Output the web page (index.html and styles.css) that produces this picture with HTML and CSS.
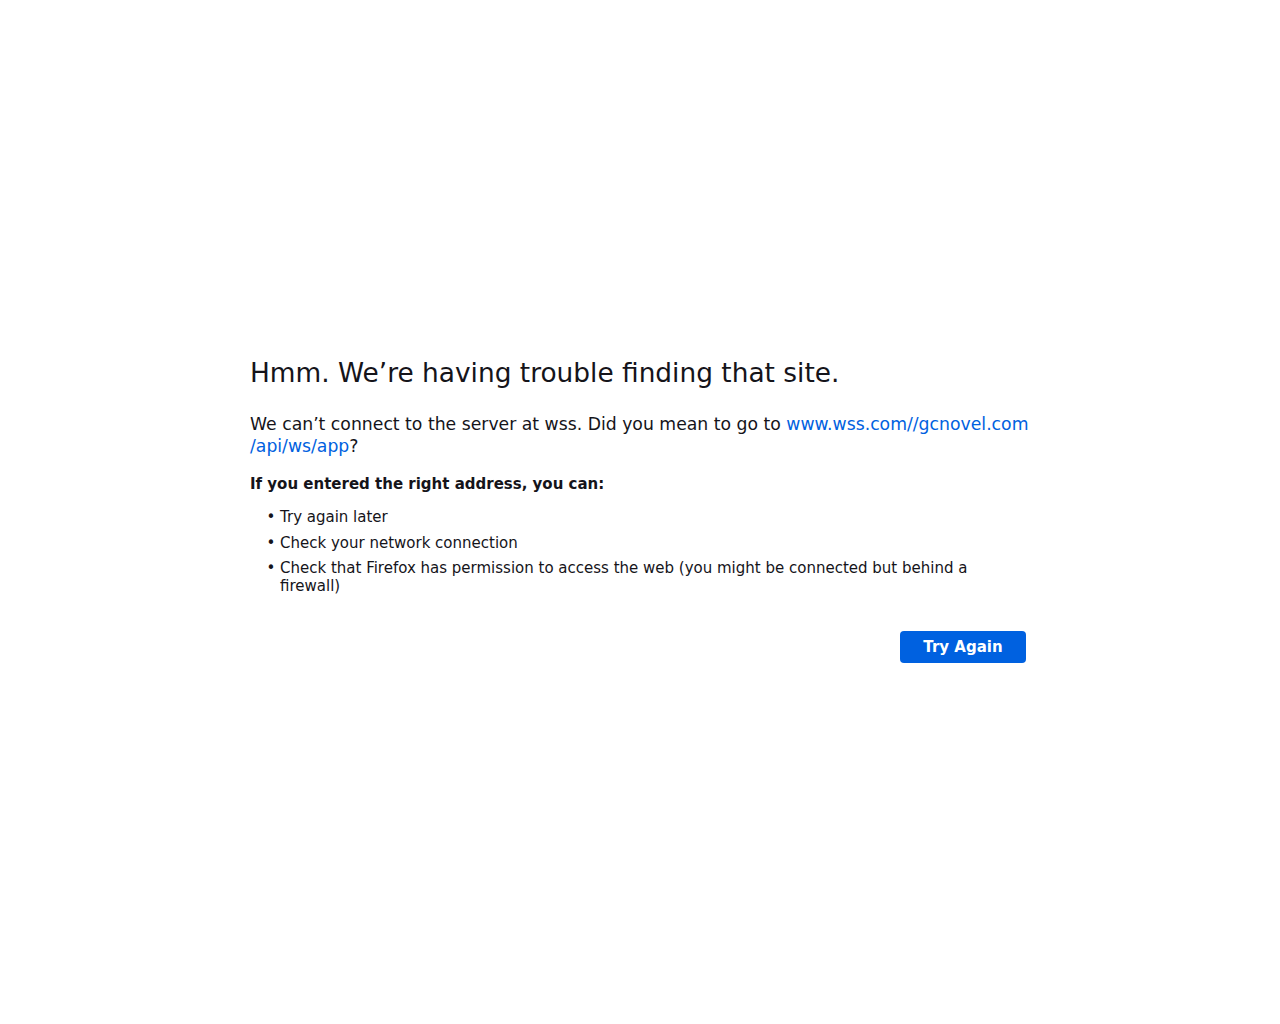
FILE: index.html
```html
<!DOCTYPE html>
<html lang="en">
<head>
  <meta charset="UTF-8">
  <title>Problem loading page</title>
  <link rel="stylesheet" href="styles.css">
</head>
<body>
  <div class="container">
    <h1 class="title">Hmm. We’re having trouble finding that site.</h1>

    <p class="short-desc">
      We can’t connect to the server at wss. Did you mean to go to
      <a href="#">www.wss.com//gcnovel.com<wbr>/api/ws/app</a>?
    </p>

    <p class="what-to-do">If you entered the right address, you can:</p>
    <ul class="tips">
      <li>Try again later</li>
      <li>Check your network connection</li>
      <li>Check that Firefox has permission to access the web (you might be connected but behind a firewall)</li>
    </ul>

    <div class="button-row">
      <button class="primary">Try Again</button>
    </div>
  </div>
</body>
</html>
```

FILE: styles.css
```css
body {
  margin: 0;
  padding-bottom: 4px;
  box-sizing: border-box;
  min-height: 100vh;
  display: flex;
  align-items: center;
  justify-content: center;
  font-family: "DejaVu Sans", sans-serif;
  font-size: 15px;
  color: #15141a;
  background: #fff;
}

.container {
  width: 780px;
}

.title {
  font-size: 26.4px;
  font-weight: normal;
  line-height: 32px;
  margin: 0 0 24px;
}

.short-desc {
  font-size: 17.25px;
  line-height: 22px;
  margin: 0 0 18px;
}

a {
  color: #0061e0;
  text-decoration: none;
}

.what-to-do {
  font-weight: bold;
  margin: 0 0 15px;
}

.tips {
  margin: 0;
  padding-left: 30px;
}

.tips li {
  line-height: 18px;
  margin-bottom: 7.5px;
}

.tips li::marker {
  content: "• ";
}

.button-row {
  display: flex;
  justify-content: flex-end;
  margin-top: 36px;
  padding-right: 4px;
}

.primary {
  font-family: inherit;
  font-size: 15px;
  font-weight: bold;
  color: #fff;
  background: #0061e0;
  border: none;
  border-radius: 4px;
  width: 126px;
  height: 32px;
}
```
